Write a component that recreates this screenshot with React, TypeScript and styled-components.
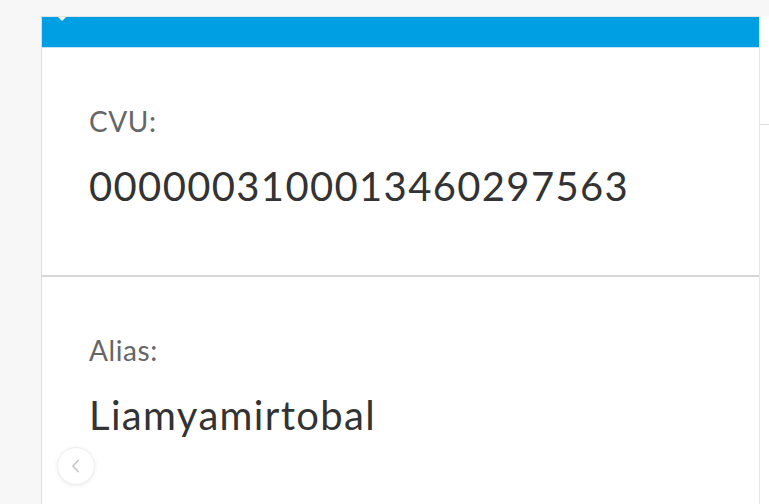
import React from "react";
import styled, { createGlobalStyle } from "styled-components";

const Global = createGlobalStyle`
  html, body { margin: 0; padding: 0; background: #f7f7f7; }
  body { font-family: Lato, "Open Sans", sans-serif; overflow: hidden; }
`;

const Page = styled.div`
  position: relative;
  display: flex;
  height: 504px;
  padding: 16px 0 0 41px;
  box-sizing: border-box;
  background: #f7f7f7;
`;

const Card = styled.div`
  width: 719px;
  flex: none;
  background: #fff;
  border-left: 1px solid #dcdcdc;
  border-top: 1px solid #e2e2e2;
  border-right: 1px solid #e6e6e6;
  box-sizing: border-box;
  display: flex;
  flex-direction: column;
`;

const Header = styled.div`
  position: relative;
  height: 30px;
  background: #009ee3;
  border-bottom: 1px solid #c4e2f3;
`;

const Caret = styled.div`
  position: absolute;
  left: 16px;
  top: 0;
  width: 0;
  height: 0;
  border-left: 4px solid transparent;
  border-right: 4px solid transparent;
  border-top: 4px solid #fff;
`;

const Section = styled.div<{ $divider?: boolean }>`
  display: flex;
  flex-direction: column;
  padding: 57px 0 0 47px;
  height: ${(p) => (p.$divider ? "229px" : "auto")};
  box-sizing: border-box;
  border-bottom: ${(p) => (p.$divider ? "2px solid #d6d6d6" : "none")};
`;

const Label = styled.div`
  font-size: 28px;
  line-height: 32px;
  color: #666;
  letter-spacing: 0.6px;
`;

const Value = styled.div`
  margin-top: 25px;
  font-size: 40px;
  line-height: 48px;
  color: #333;
  letter-spacing: 1.35px;
`;

const Side = styled.div`
  flex: 1;
  background: #fff;
  display: flex;
  flex-direction: column;
`;

const SideRow = styled.div`
  height: 108px;
  border-bottom: 1px solid #dedede;
`;

const BackButton = styled.button`
  position: absolute;
  left: 57px;
  top: 447px;
  width: 38px;
  height: 38px;
  border-radius: 50%;
  background: #fff;
  border: 1px solid #eeeeee;
  box-shadow: 0 1px 4px rgba(0, 0, 0, 0.07);
  display: flex;
  align-items: center;
  justify-content: center;
  padding: 0;
`;

export default function App() {
  return (
    <>
      <Global />
      <Page>
        <Card>
          <Header>
            <Caret />
          </Header>
          <Section $divider>
            <Label>CVU:</Label>
            <Value>0000003100013460297563</Value>
          </Section>
          <Section>
            <Label>Alias:</Label>
            <Value>Liamyamirtobal</Value>
          </Section>
        </Card>
        <Side>
          <SideRow />
        </Side>
        <BackButton aria-label="Volver">
          <svg width="18" height="18" viewBox="0 0 18 18" fill="none">
            <path d="M11 3.5 L6 9 L11 14.5" stroke="#c8c8c8" strokeWidth="1.8" strokeLinecap="round" strokeLinejoin="round" />
          </svg>
        </BackButton>
      </Page>
    </>
  );
}
